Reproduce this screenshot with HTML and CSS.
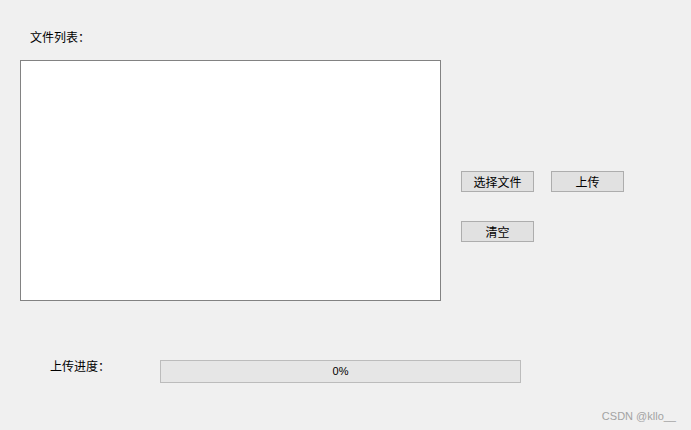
FILE: index.html
```html
<!DOCTYPE html>
<html lang="zh">
<head>
<meta charset="utf-8">
<title>文件上传</title>
<link rel="stylesheet" href="styles.css">
</head>
<body>
<div class="app">
  <div class="title">文件列表：</div>
  <div class="main">
    <div class="list"></div>
    <div class="actions">
      <button class="btn">选择文件</button>
      <button class="btn">上传</button>
      <button class="btn">清空</button>
    </div>
  </div>
  <div class="progress-row">
    <div class="progress-label">上传进度：</div>
    <div class="bar">0%</div>
  </div>
  <div class="watermark">CSDN @kllo__</div>
</div>
</body>
</html>
```
FILE: styles.css
```css
html, body {
  margin: 0;
  padding: 0;
  background: #f0f0f0;
}
.app {
  position: relative;
  width: 691px;
  height: 430px;
  box-sizing: border-box;
  padding-top: 28px;
  font-family: "Noto Sans CJK SC", "Liberation Sans", sans-serif;
  font-size: 12px;
  color: #000;
}
.title {
  padding-left: 30px;
  height: 17px;
  line-height: 17px;
}
.main {
  display: flex;
  margin-top: 15px;
  padding-left: 20px;
}
.list {
  width: 421px;
  height: 241px;
  box-sizing: border-box;
  border: 1px solid #828282;
  background: #fff;
}
.actions {
  margin-left: 20px;
  padding-top: 111px;
  display: grid;
  grid-template-columns: 73px 73px;
  grid-auto-rows: 21px;
  column-gap: 17px;
  row-gap: 29px;
  align-content: start;
}
.btn {
  margin: 0;
  padding: 0;
  width: 73px;
  height: 21px;
  box-sizing: border-box;
  border: 1px solid #adadad;
  background: #e1e1e1;
  font-family: inherit;
  font-size: 12px;
  line-height: 19px;
  color: #000;
}
.progress-row {
  display: flex;
  align-items: flex-start;
  margin-top: 59px;
  padding-left: 50px;
}
.progress-label {
  width: 110px;
  line-height: 14px;
  margin-top: -1px;
}
.bar {
  width: 361px;
  height: 23px;
  box-sizing: border-box;
  border: 1px solid #bcbcbc;
  background: #e6e6e6;
  text-align: center;
  line-height: 21px;
  font-family: "Liberation Sans", sans-serif;
  font-size: 11px;
}
.watermark {
  position: absolute;
  right: 15px;
  bottom: 8px;
  font-family: "Liberation Sans", sans-serif;
  font-size: 11px;
  color: #a3a3a3;
}
```
